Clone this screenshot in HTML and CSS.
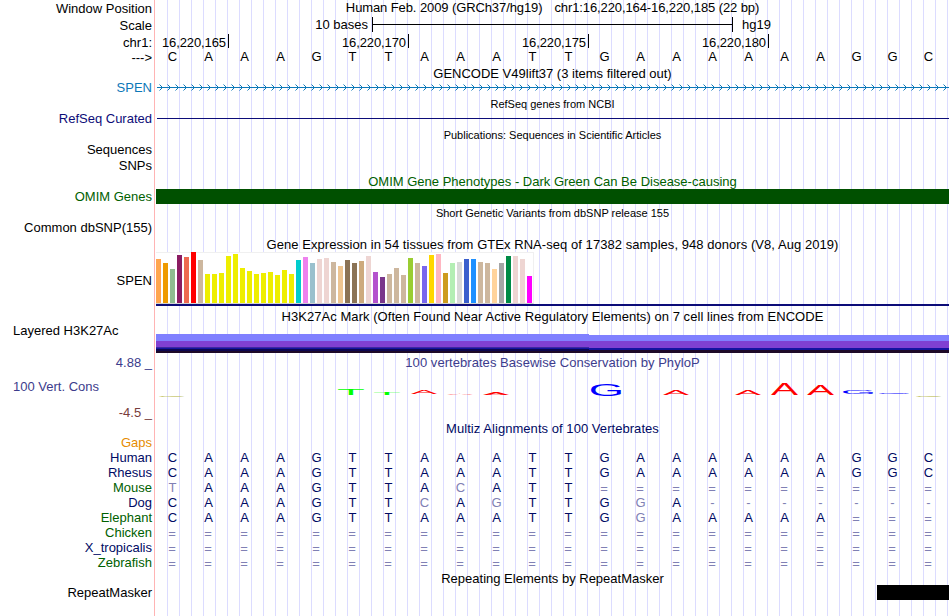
FILE: index.html
```
<!DOCTYPE html>
<html lang="en">
<head>
    <meta charset="UTF-8">
    <meta name="viewport" content="width=device-width, initial-scale=1.0">
    <title>Human chr1:16,220,164-16,220,185 Genome Browser</title>
    <link rel="stylesheet" href="styles.css">
</head>
<body>
    <div class="browser">
        <div class="row h17">
            <div class="label">Window Position</div>
            <div class="title position"><span>Human Feb. 2009 (GRCh37/hg19)</span><span>chr1:16,220,164-16,220,185 (22 bp)</span></div>
        </div>
        <div class="row h17">
            <div class="label">Scale</div>
            <div class="track scale">
                <span class="scale-text">10 bases</span>
                <div class="scale-bar"></div>
                <span>hg19</span>
            </div>
        </div>
        <div class="row h17">
            <div class="label">chr1:</div>
            <div class="track ruler">
                <span>16,220,165</span>
                <span>16,220,170</span>
                <span>16,220,175</span>
                <span>16,220,180</span>
            </div>
        </div>
        <div class="row h14">
            <div class="label">---&gt;</div>
            <div class="track bases black" data-seq="CAAAGTTAAATTGAAAAAAGGC"></div>
        </div>

        <div class="row h16"><div class="title gencode">GENCODE V49lift37 (3 items filtered out)</div></div>
        <div class="row h14">
            <div class="label gene">SPEN</div>
            <svg class="track" width="793" height="14">
                <defs>
                    <pattern id="arrows" x="1" width="8" height="14" patternUnits="userSpaceOnUse">
                        <path d="M2.5 3.5L5.5 6.5L2.5 9.5" fill="none" stroke="#0c78b8"/>
                    </pattern>
                </defs>
                <rect x="1" width="792" height="14" fill="url(#arrows)"/>
                <rect x="1" y="6" width="792" height="1" fill="#0c78b8"/>
            </svg>
        </div>

        <div class="row h17"><div class="title small">RefSeq genes from NCBI</div></div>
        <div class="row h14">
            <div class="label navy">RefSeq Curated</div>
            <div class="track"><div class="gene-line"></div></div>
        </div>

        <div class="row h17"><div class="title small">Publications: Sequences in Scientific Articles</div></div>
        <div class="row h15"><div class="label raised">Sequences</div></div>
        <div class="row h16"><div class="label">SNPs</div></div>

        <div class="row h15"><div class="title green">OMIM Gene Phenotypes - Dark Green Can Be Disease-causing</div></div>
        <div class="row h15">
            <div class="label green">OMIM Genes</div>
            <div class="track omim"></div>
        </div>

        <div class="row h17"><div class="title small">Short Genetic Variants from dbSNP release 155</div></div>
        <div class="row h15"><div class="label raised">Common dbSNP(155)</div></div>

        <div class="row h16"><div class="title long">Gene Expression in 54 tissues from GTEx RNA-seq of 17382 samples, 948 donors (V8, Aug 2019)</div></div>
        <div class="row gtex-row">
            <div class="label">SPEN</div>
            <div class="track gtex"><div class="bars" id="bars"></div></div>
        </div>

        <div class="row h20"><div class="title long">H3K27Ac Mark (Often Found Near Active Regulatory Elements) on 7 cell lines from ENCODE</div></div>
        <div class="row layered-row">
            <div class="label left">Layered H3K27Ac</div>
            <div class="track layered"><div class="layers-a"></div><div class="layers-b"></div></div>
        </div>

        <div class="row h17">
            <div class="label blue">4.88 _</div>
            <div class="title blue conservation">100 vertebrates Basewise Conservation by PhyloP</div>
        </div>
        <div class="row phylop-row">
            <div class="label left blue">100 Vert. Cons</div>
            <svg class="track logo" id="logo" width="793" height="33"></svg>
        </div>
        <div class="row h17"><div class="label maroon">-4.5 _</div></div>

        <div class="row h15"><div class="title dark conservation">Multiz Alignments of 100 Vertebrates</div></div>
        <div class="multiz">
            <div class="row"><div class="label orange">Gaps</div></div>
            <div class="row"><div class="label dark">Human</div><div class="track bases" data-seq="CAAAGTTAAATTGAAAAAAGGC"></div></div>
            <div class="row"><div class="label dark">Rhesus</div><div class="track bases" data-seq="CAAAGTTAAATTGAAAAAAGGC"></div></div>
            <div class="row"><div class="label green">Mouse</div><div class="track bases" data-seq="tAAAGTTAcATT=========="></div></div>
            <div class="row"><div class="label dark">Dog</div><div class="track bases" data-seq="CAAAGTTcAgTTGgA-------"></div></div>
            <div class="row"><div class="label green">Elephant</div><div class="track bases" data-seq="CAAAGTTAAATTGgAAAAA==="></div></div>
            <div class="row"><div class="label green">Chicken</div><div class="track bases" data-seq="======================"></div></div>
            <div class="row"><div class="label dark">X_tropicalis</div><div class="track bases" data-seq="======================"></div></div>
            <div class="row"><div class="label green">Zebrafish</div><div class="track bases" data-seq="======================"></div></div>
        </div>

        <div class="row h14"><div class="title repeat-title">Repeating Elements by RepeatMasker</div></div>
        <div class="row h15">
            <div class="label">RepeatMasker</div>
            <div class="track"><div class="repeat"></div></div>
        </div>
    </div>

    <script>
        // one cell per base, lower case and gaps are drawn faded
        document.querySelectorAll(".bases").forEach(track => {
            for (const c of track.dataset.seq) {
                const cell = document.createElement("span");
                cell.textContent = c.toUpperCase();
                if (c < "A" || c > "Z") cell.className = c === "=" ? "faded gap" : "faded";
                track.appendChild(cell);
            }
        });

        // GTEx tissues: colour, height
        const tissues = [
            ["#ffa54f", 44], ["#ee9a00", 40], ["#8fbc8f", 34], ["#8b1c62", 48], ["#ee6a50", 46], ["#ff0000", 51],
            ["#cdb79e", 43], ["#eeee00", 29], ["#eeee00", 29], ["#eeee00", 30], ["#eeee00", 47], ["#eeee00", 49],
            ["#eeee00", 35], ["#eeee00", 32], ["#eeee00", 29], ["#eeee00", 30], ["#eeee00", 31], ["#eeee00", 28],
            ["#eeee00", 33], ["#eeee00", 29], ["#00cdcd", 43], ["#ee82ee", 46], ["#9ac0cd", 40], ["#eed5d2", 44],
            ["#eed5d2", 45], ["#cdb79e", 41], ["#eec591", 37], ["#8b7355", 43], ["#8b7355", 40], ["#cdaa7d", 42],
            ["#eed5d2", 47], ["#b452cd", 31], ["#7a378b", 26], ["#cdb79e", 29], ["#cdb79e", 35], ["#cdb79e", 28],
            ["#9acd32", 45], ["#cdb79e", 40], ["#7a67ee", 37], ["#ffd700", 48], ["#ffb6c1", 49], ["#cd9b1d", 30],
            ["#b4eeb4", 40], ["#d9d9d9", 41], ["#3a5fcd", 44], ["#1e90ff", 44], ["#cdb79e", 41], ["#cdb79e", 40],
            ["#ffd39b", 34], ["#a6a6a6", 40], ["#008b45", 47], ["#eed5d2", 47], ["#eed5d2", 44], ["#ff00ff", 27]
        ];
        const bars = document.getElementById("bars");
        for (const [color, height] of tissues) {
            const bar = document.createElement("div");
            bar.style.background = color;
            bar.style.height = height + "px";
            bars.appendChild(bar);
        }

        // conservation logo: base, left, right, top, bottom, colour
        const letters = [
            ["C", 3, 29, 24.5, 26, "#b4b43c"], ["T", 182, 208, 17, 23.5, "#00ff00"], ["T", 218, 244, 21, 23.5, "#00ff00"],
            ["A", 255, 281, 19, 23.3, "#ff0000"], ["A", 291, 317, 22.5, 23.5, "#ff0000"], ["A", 327, 353, 21.5, 23.5, "#ff0000"],
            ["G", 435, 465, 12.5, 24.5, "#0000ff"], ["A", 507, 533, 18.5, 23.5, "#ff0000"], ["A", 579, 605, 18.5, 23.5, "#ff0000"],
            ["A", 615, 642, 13.5, 24.3, "#ff0000"], ["A", 651, 678, 14.3, 24.3, "#ff0000"], ["G", 687, 717, 19.3, 23.2, "#0000ff"],
            ["G", 723, 753, 21.7, 23.3, "#0000ff"], ["C", 760, 786, 24.5, 26, "#b4b43c"]
        ];
        // left bearing and ink width at 100px
        const ink = { A: [0, 66.5], C: [5, 64], G: [5, 66], T: [2, 57] };
        const logo = document.getElementById("logo");
        for (const [base, left, right, top, bottom, color] of letters) {
            const t = document.createElementNS("http://www.w3.org/2000/svg", "text");
            const sx = (right - left) / ink[base][1];
            const sy = (bottom - top) / 69;
            t.setAttribute("transform", `translate(${left - ink[base][0] * sx} ${bottom}) scale(${sx} ${sy})`);
            t.setAttribute("fill", color);
            t.textContent = base;
            logo.appendChild(t);
        }
    </script>
</body>
</html>
```
FILE: styles.css
```
body {
    margin: 0;
    background: white;
    font-family: "Liberation Sans", Arial, sans-serif;
    font-size: 13px;
    color: black;
}
.browser {
    width: 949px;
    height: 616px;
    overflow: hidden;
    background-image: linear-gradient(#ffb4b4, #ffb4b4), repeating-linear-gradient(to right, #dcdcff 0, #dcdcff 1px, transparent 1px, transparent 12px);
    background-size: 1px 100%, 782px 100%;
    background-position: 154px 0, 167px 0;
    background-repeat: no-repeat;
}
.row {
    display: flex;
    height: 15px;
    line-height: 15px;
    white-space: nowrap;
}
.h14 { height: 14px; line-height: 14px; }
.h15 { height: 15px; line-height: 15px; }
.h16 { height: 16px; line-height: 16px; }
.h17 { height: 17px; line-height: 17px; }
.h20 { height: 20px; line-height: 22px; }
.label {
    width: 152px;
    margin-right: 4px;
    text-align: right;
}
.label.left {
    width: 139px;
    padding-left: 13px;
    text-align: left;
}
.label.raised {
    line-height: 13px;
}
.track {
    width: 793px;
}
.title {
    width: 793px;
    margin-left: auto;
    text-align: center;
}
.label + .title {
    margin-left: 0;
}
.title.gencode {
    line-height: 18px;
}
.title.long {
    line-height: 18px;
    letter-spacing: 0.05px;
}
.h20 .title.long {
    line-height: 22px;
}
.title.conservation {
    letter-spacing: 0.05px;
}
.title.repeat-title {
    line-height: 15px;
}
.title.small {
    font-size: 11px;
    line-height: 18px;
}
.position {
    display: flex;
    justify-content: center;
    gap: 12px;
    line-height: 15px;
    letter-spacing: -0.1px;
}
.scale {
    display: flex;
    line-height: 16px;
}
.scale-text {
    width: 212px;
    margin-right: 4px;
    text-align: right;
}
.scale-bar {
    width: 359px;
    height: 15px;
    margin-right: 9px;
    border: solid black;
    border-width: 0 1px;
    background: linear-gradient(black, black) 0 7px / 100% 1px no-repeat;
}
.ruler {
    display: flex;
    letter-spacing: -0.1px;
}
.ruler span {
    width: 177px;
    height: 14px;
    padding-right: 2px;
    border-right: 1px solid black;
    text-align: right;
}
.ruler span:first-child {
    width: 70px;
}
.bases {
    display: flex;
    margin-left: -1.5px;
    color: #000a64;
}
.bases.black {
    color: black;
    line-height: 12px;
}
.bases span {
    width: 36px;
    text-align: center;
}
.bases .faded {
    color: #8080b4;
}
.bases .gap {
    box-sizing: border-box;
    padding: 1px 1px 0 0;
}
.gene { color: #0c78b8; }
.navy { color: #0c0c78; }
.green { color: #006000; }
.blue { color: #3c3c8c; }
.maroon { color: #783c3c; }
.dark { color: #000a64; }
.orange { color: #e68c00; }
.gene-line {
    height: 1px;
    margin: 6px 0 0 1px;
    background: #0c0c78;
}
.omim {
    background: #005000;
}
.gtex-row {
    height: 54px;
    line-height: 58px;
}
.gtex {
    border-bottom: 2px solid #0c0c78;
}
.bars {
    display: flex;
    align-items: flex-end;
    gap: 2px;
    box-sizing: border-box;
    width: 378px;
    height: 52px;
    background: white;
    border: solid #f0f0f0;
    border-width: 1px 1px 0 0;
    border-bottom: 1px solid #d2d2d2;
}
.bars div {
    flex: none;
    width: 5px;
}
.layered-row {
    height: 28px;
    line-height: 9px;
}
.layered {
    display: flex;
    height: 19px;
    margin-top: 8px;
}
.layers-a {
    width: 433px;
    background: linear-gradient(#8080ff 7px, #8040d2 7px 13px, #3c28a0 13px 14px, #1414a0 14px 15px, #0c0650 15px 17px, #1e0a28 17px);
}
.layers-b {
    flex: 1;
    margin-top: 1px;
    background: linear-gradient(#8080ff 6px, #8040d2 6px 13px, #1414a0 13px 15px, #1e0a28 15px);
}
.phylop-row {
    height: 33px;
    line-height: 32px;
}
.logo text {
    font-size: 100px;
}
.multiz {
    height: 135px;
}
.multiz .row {
    line-height: 13px;
}
.repeat {
    width: 72px;
    height: 15px;
    margin-left: auto;
    background: black;
}
```
